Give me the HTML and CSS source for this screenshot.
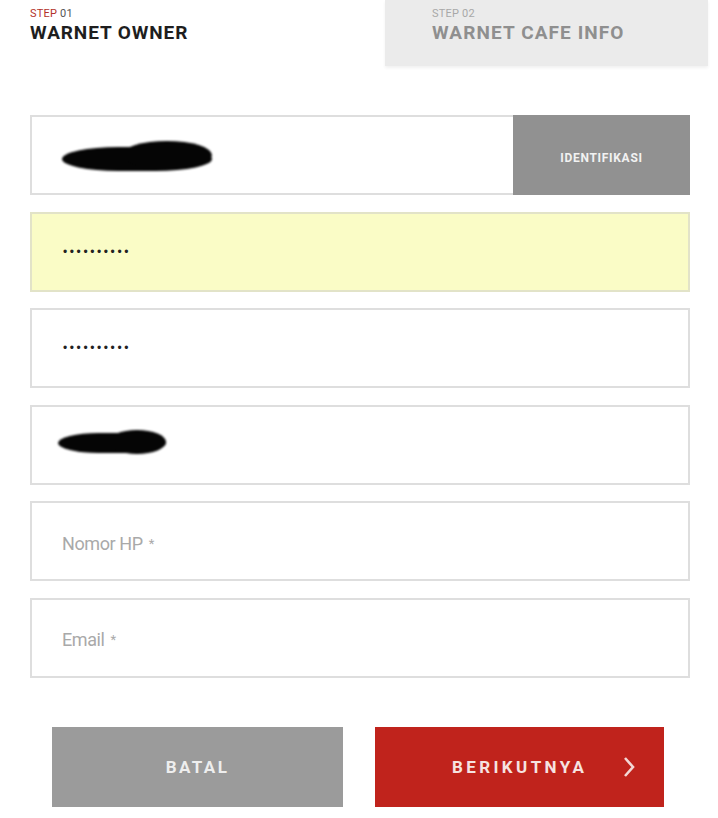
FILE: index.html
```html
<!DOCTYPE html>
<html lang="id">
<head>
<meta charset="utf-8">
<title>Warnet Owner</title>
<link rel="stylesheet" href="styles.css">
</head>
<body>
<div class="steps">
  <div class="step step-active">
    <div class="step-num"><span class="step-word">STEP</span> 01</div>
    <div class="step-title">WARNET OWNER</div>
  </div>
  <div class="step step-inactive">
    <div class="step-num">STEP 02</div>
    <div class="step-title">WARNET CAFE INFO</div>
  </div>
</div>

<form class="form">
  <div class="field field-with-btn">
    <div class="field-value"><span class="redact redact-long"><span class="redact-bump"></span></span></div>
    <div class="ident-btn">IDENTIFIKASI</div>
  </div>
  <div class="field field-autofill">
    <div class="field-value"><span class="dots">••••••••••</span></div>
  </div>
  <div class="field">
    <div class="field-value"><span class="dots">••••••••••</span></div>
  </div>
  <div class="field">
    <div class="field-value"><span class="redact redact-short"><span class="redact-bump"></span></span></div>
  </div>
  <div class="field">
    <div class="field-value placeholder"><span>Nomor HP</span><span class="req">*</span></div>
  </div>
  <div class="field">
    <div class="field-value placeholder"><span>Email</span><span class="req">*</span></div>
  </div>

  <div class="actions">
    <div class="btn btn-cancel">BATAL</div>
    <div class="btn btn-next">
      <span class="btn-label">BERIKUTNYA</span>
      <svg class="chev" width="12" height="22" viewBox="0 0 12 22"><path d="M2 2 L10 11 L2 20" fill="none" stroke="#f3d7d5" stroke-width="2.6"/></svg>
    </div>
  </div>
</form>
</body>
</html>
```

FILE: styles.css
```css
html, body {
  margin: 0;
  padding: 0;
  background: #ffffff;
  font-family: Roboto, "Liberation Sans", sans-serif;
}

.steps {
  display: flex;
  height: 66px;
}

.step {
  box-sizing: border-box;
  padding-top: 7px;
}

.step-active {
  width: 385px;
  padding-left: 30px;
}

.step-inactive {
  width: 323px;
  padding-left: 47px;
  background: #ebebeb;
  box-shadow: 0 2px 3px rgba(0,0,0,0.06);
}

.step-num {
  font-size: 11px;
  line-height: 13px;
  color: #555;
  letter-spacing: 0.2px;
}

.step-word {
  color: #b3312a;
}

.step-inactive .step-num {
  color: #a8a8a8;
}

.step-title {
  font-size: 19px;
  line-height: 25px;
  font-weight: 700;
  color: #1e1e1e;
  letter-spacing: 0.9px;
}

.step-inactive .step-title {
  color: #8f8f8f;
  letter-spacing: 1.1px;
}

.form {
  margin: 49px 28px 0 30px;
  display: flex;
  flex-direction: column;
  gap: 16.6px;
}

.field {
  box-sizing: border-box;
  height: 80px;
  border: 2px solid #dedede;
  background: #fff;
  display: flex;
  align-items: center;
}

.field-autofill {
  background: #fafcc6;
  border-color: #e2e3c8;
}

.field-value {
  flex: 1;
  padding-left: 30px;
  display: flex;
  align-items: center;
}

.field-with-btn {
  align-items: stretch;
  border-right: none;
}

.ident-btn {
  width: 177px;
  background: #919191;
  color: #f2f2f2;
  font-size: 12px;
  font-weight: 700;
  letter-spacing: 0.7px;
  display: flex;
  align-items: center;
  justify-content: center;
  margin: -2px 0;
  padding-top: 6px;
  box-sizing: border-box;
}

.redact {
  position: relative;
  display: inline-block;
  background: #050505;
  border-radius: 45% / 60%;
  filter: blur(0.8px);
}

.redact-bump {
  position: absolute;
  background: #050505;
  border-radius: 50%;
}

.redact-long {
  width: 150px;
  height: 24px;
  margin-top: 8px;
}

.redact-long .redact-bump {
  left: 60px;
  top: -6px;
  width: 90px;
  height: 28px;
}

.redact-short {
  width: 108px;
  height: 20px;
  margin-left: -4px;
  margin-top: -4px;
}

.redact-short .redact-bump {
  left: 50px;
  top: -3px;
  width: 58px;
  height: 24px;
}

.dots {
  font-family: "Liberation Sans", sans-serif;
  font-size: 12px;
  letter-spacing: 2.6px;
  color: #222;
  margin-left: 1px;
}

.placeholder {
  font-size: 18px;
  color: #a9a9a9;
  letter-spacing: -0.4px;
  padding-top: 4px;
}

.req {
  font-size: 13px;
  margin-left: 6px;
}

.actions {
  display: grid;
  grid-template-columns: 291px 289px;
  gap: 32px;
  margin: 32px 0 0 22px;
}

.btn {
  box-sizing: border-box;
  height: 80px;
  display: flex;
  align-items: center;
  justify-content: center;
  font-size: 17px;
  font-weight: 700;
  letter-spacing: 2.4px;
  color: #eeeeee;
}

.btn-cancel {
  background: #9b9b9b;
}

.btn-next {
  background: #c0231c;
  color: #f6e3e1;
  justify-content: flex-start;
  padding-left: 77px;
  gap: 36px;
  letter-spacing: 3.4px;
}

.chev {
  display: block;
}
```
